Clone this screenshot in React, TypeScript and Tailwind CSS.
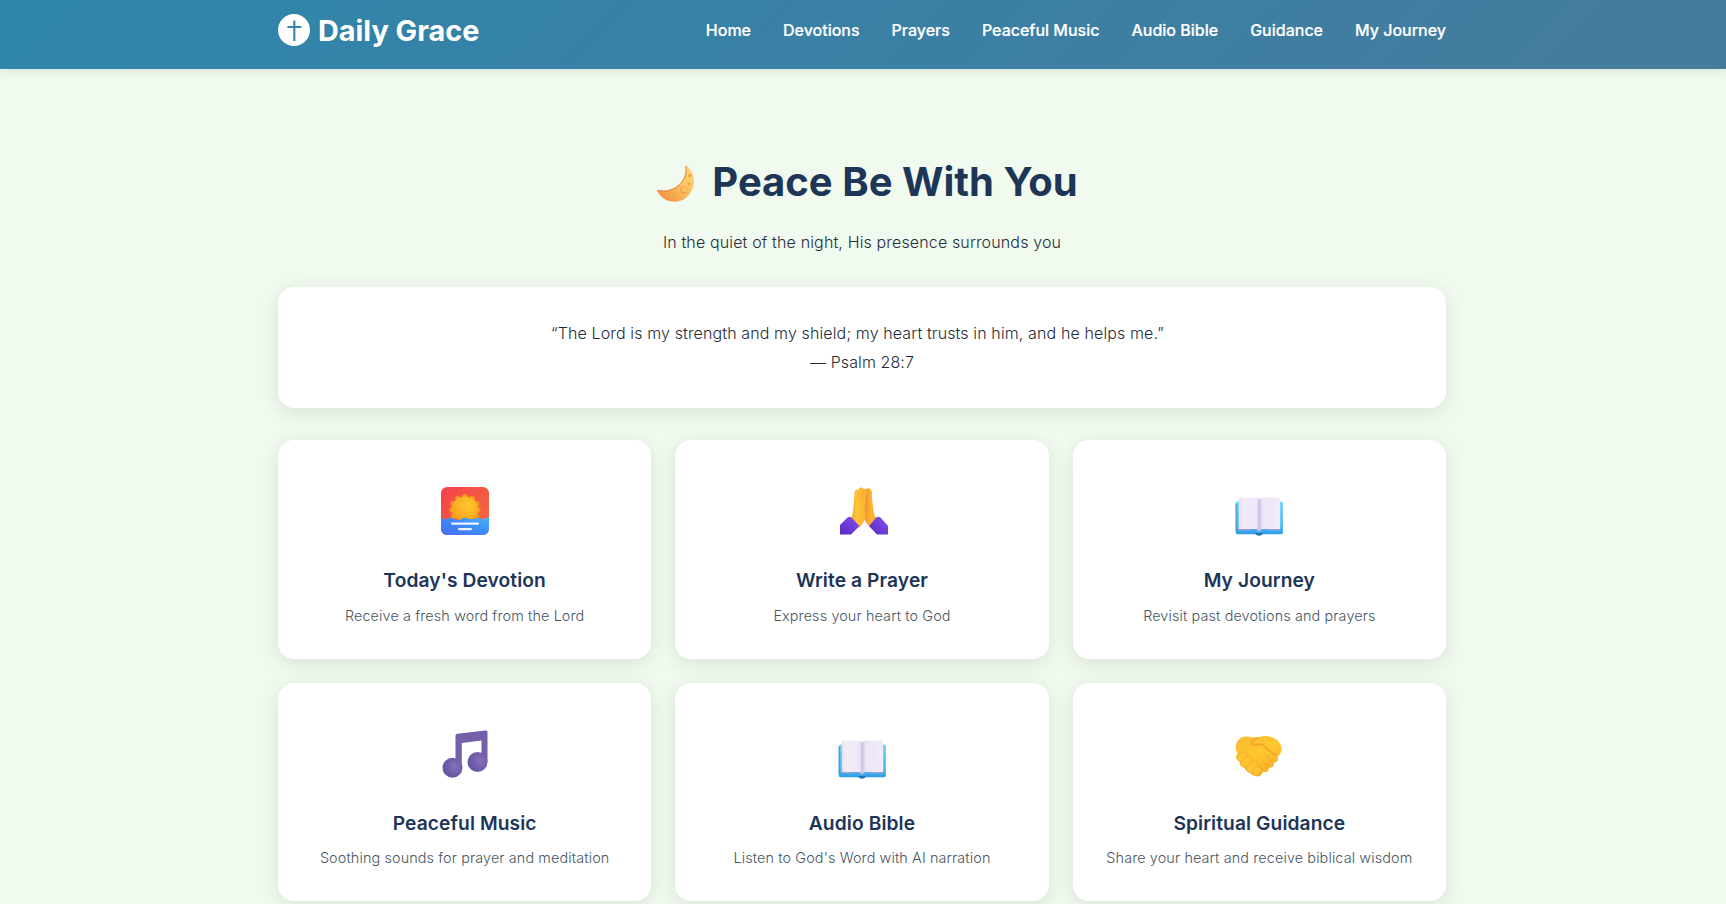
import type { ReactNode } from "react";

function SunriseIcon() {
  return (
    <svg width="48" height="48" viewBox="0 0 48 48">
      <defs>
        <linearGradient id="sky" x1="0" y1="0" x2="1" y2="1">
          <stop offset="0" stopColor="#f5404b" />
          <stop offset="1" stopColor="#f4713f" />
        </linearGradient>
        <linearGradient id="sea" x1="0" y1="1" x2="1" y2="0">
          <stop offset="0" stopColor="#4a6cf6" />
          <stop offset="0.55" stopColor="#3c8dfb" />
          <stop offset="1" stopColor="#4fb4f2" />
        </linearGradient>
        <radialGradient id="sun" cx="0.6" cy="0.35" r="0.7">
          <stop offset="0" stopColor="#ffc62c" />
          <stop offset="1" stopColor="#f9a31d" />
        </radialGradient>
        <clipPath id="frame">
          <rect width="48" height="48" rx="6" />
        </clipPath>
      </defs>
      <g clipPath="url(#frame)">
        <rect width="48" height="48" fill="url(#sky)" />
        <g fill="#f39a1d">
          <circle cx="24" cy="10" r="3" /><circle cx="17" cy="12" r="3" /><circle cx="31" cy="12" r="3" />
          <circle cx="12.5" cy="17" r="3" /><circle cx="35.5" cy="17" r="3" /><circle cx="11.5" cy="23" r="3" />
          <circle cx="36.5" cy="23" r="3" /><circle cx="13" cy="29" r="3" /><circle cx="35" cy="29" r="3" />
        </g>
        <circle cx="24" cy="22" r="12.6" fill="url(#sun)" />
        <path d="M0 31c3 0 3 2 6 1s4-2 7 0 6 1 8-.5 6 0 8 .6 5-.3 7-1 4 1 6 1 3-2 6-1.6V48H0Z" fill="url(#sea)" />
        <rect x="10" y="35.4" width="28" height="2.3" rx="1.1" fill="#eef1ff" />
        <rect x="17" y="41" width="14" height="2.2" rx="1.1" fill="#eef1ff" />
      </g>
    </svg>
  );
}

function PrayIcon() {
  return (
    <svg className="ml-1" width="48" height="48" viewBox="0 0 48 48">
      <defs>
        <linearGradient id="handL" x1="0" y1="0" x2="1" y2="0">
          <stop offset="0" stopColor="#f5a31f" />
          <stop offset="0.4" stopColor="#ffc637" />
          <stop offset="1" stopColor="#fbae2a" />
        </linearGradient>
        <linearGradient id="handR" x1="0" y1="0" x2="1" y2="0">
          <stop offset="0" stopColor="#ef9034" />
          <stop offset="0.45" stopColor="#ffb52d" />
          <stop offset="1" stopColor="#f8a426" />
        </linearGradient>
        <linearGradient id="cuff" x1="0" y1="1" x2="1" y2="0">
          <stop offset="0" stopColor="#542ac0" />
          <stop offset="1" stopColor="#8a50f4" />
        </linearGradient>
      </defs>
      <path d="M24 5c1-4 5-5 7-2 1.500 2 1 5 1 8l1 9 1.500 9 6 5-8 8c-6-4-8.500-9-8.500-16Z" fill="url(#handR)" />
      <path d="M14.500 6c0-4 3-4 4-3 0-3 4-3 5-1 3-1 3.500 1 3.500 3 0 9-1 15-1 22 0 6-3 9-7 14l-9-7c3-4 3.500-14 4.500-28Z" fill="url(#handL)" />
      <path d="M18.500 3.500v9M23 3l-.8 10" stroke="#f2a029" strokeWidth=".7" fill="none" />
      <path d="M25.800 28c0-8 .6-14 .8-21" stroke="#e78b3d" strokeWidth="1" fill="none" />
      <path d="M7.500 30.500c2-1 3-1 5 1l7 7.500-8.500 8.500H0V38Z" fill="url(#cuff)" />
      <path d="M40.500 30.500c-2-1-3-1-5 1l-6.500 7.500 8 8.500h11v-8.500Z" fill="url(#cuff)" />
    </svg>
  );
}

function BookIcon() {
  return (
    <svg className="overflow-visible" width="48" height="48" viewBox="0 0 48 48">
      <defs>
        <linearGradient id="cover" x1="0" y1="0" x2="0" y2="1">
          <stop offset="0" stopColor="#6fd0f4" />
          <stop offset="0.75" stopColor="#43bdf8" />
          <stop offset="1" stopColor="#2f9be6" />
        </linearGradient>
        <linearGradient id="pages" x1="0" y1="0" x2="1" y2="0">
          <stop offset="0" stopColor="#e6dff0" />
          <stop offset="0.08" stopColor="#f1eaf8" />
          <stop offset="0.42" stopColor="#efe8f9" />
          <stop offset="0.5" stopColor="#d2c4e4" />
          <stop offset="0.58" stopColor="#ede5f8" />
          <stop offset="1" stopColor="#f1ebfa" />
        </linearGradient>
      </defs>
      <rect x=".7" y="14.500" width="47.200" height="32.800" rx="1.800" fill="url(#cover)" />
      <path d="M1.200 17v27" stroke="#548cb0" strokeWidth="1" />
      <path d="M20 46h8c-.8 3.600-7.200 3.600-8 0Z" fill="#1974ba" />
      <path d="M3.500 41 24 43.500 45 41v2.200H27l-3 2-3-2H3.500Z" fill="#aaa1cb" />
      <path d="M5.500 10.500H20q3 0 4.300 1.700 1.200-1.700 4-1.700h15.200q1.700 0 1.700 1.700V42H28q-2.500 0-3.800 2-1.500-2-4.200-2H3.800V12.200q0-1.700 1.700-1.700Z" fill="url(#pages)" />
      <path d="M24.300 12.500V43" stroke="#c9bcdd" strokeWidth=".7" />
    </svg>
  );
}

function MusicIcon() {
  return (
    <svg width="48" height="48" viewBox="0 0 48 48">
      <defs>
        <radialGradient id="note" cx="0.62" cy="0.42" r="0.6">
          <stop offset="0" stopColor="#8570bd" />
          <stop offset="1" stopColor="#6654a0" />
        </radialGradient>
      </defs>
      <path d="M14.500 5.600Q14.500 4 16.100 3.700L44.500.5Q46.500.3 46.500 2.100V32h-6V10.500L20.800 13v25h-6.300Z" fill="#7360a9" />
      <circle cx="11.500" cy="37.800" r="10" fill="url(#note)" />
      <circle cx="36.500" cy="32" r="10" fill="url(#note)" />
    </svg>
  );
}

function HandshakeIcon() {
  return (
    <svg className="overflow-visible" width="48" height="48" viewBox="0 -0.5 48 48">
      <defs>
        <linearGradient id="shake" x1="0" y1="0" x2="0.6" y2="1">
          <stop offset="0" stopColor="#f8b92f" />
          <stop offset="0.5" stopColor="#ffc72e" />
          <stop offset="1" stopColor="#f9ae2b" />
        </linearGradient>
      </defs>
      <path d="M2 12c2-5 6-6 10-6 4-.2 7 2 11 1 4-1.400 8-2 13-.6 6 1.600 10 6 10.500 11 .4 4-1 6-4 8.600 1.500 4-.5 6-3.500 6 .4 4-2 6-5 5 0 4-3 6-6 4-1.500 5-5 6.500-8 3.500-2 1-5-.5-5-3.500-4 0-6-2-5-5-4 .3-6-2-5-5C.5 29 0 26 2.500 23 .3 19 0 15 2 12Z" fill="url(#shake)" />
      <path d="M23 7c-4 1-7 4-6 6 2 3 6 1 9 .4 4 2 7 6 11 9 3 2 4 2 5 3" stroke="#ef9f2a" strokeWidth="1.300" fill="none" strokeLinecap="round" />
      <path d="m32 26 6 6m-10-1 6 5m-10-1 4 5" stroke="#f0a02a" strokeWidth=".8" fill="none" strokeLinecap="round" />
      <g fill="#ffc430" stroke="#f3a42b" strokeWidth=".7">
        <rect x="1.500" y="22.500" width="11" height="7.500" rx="3.700" transform="rotate(-40 7 26)" />
        <rect x="4.500" y="27.500" width="13.500" height="7.500" rx="3.700" transform="rotate(-42 11 31)" />
        <rect x="10" y="32.500" width="13" height="7.400" rx="3.700" transform="rotate(-43 16.500 36)" />
        <rect x="16.500" y="37.200" width="10" height="7" rx="3.500" transform="rotate(-43 21.500 40.500)" />
      </g>
    </svg>
  );
}

function MoonIcon() {
  return (
    <svg className="mt-[3px] h-10 w-10" viewBox="0 0 40 40">
      <defs>
        <linearGradient id="moon" x1="1" y1="0" x2="0.1" y2="1">
          <stop offset="0" stopColor="#ffda79" />
          <stop offset="0.5" stopColor="#fcc160" />
          <stop offset="1" stopColor="#f18a40" />
        </linearGradient>
      </defs>
      <path d="M29.200 2c.3-1 1-1 1.700-.2 3.800 3.800 7.400 9.600 7.100 15.700C37.500 28 30 37.600 19 37.800 10.500 38 4.500 33 1.400 27.300c-.6-1.200 0-1.900 1-1.600C9 27.700 18 25.500 23.700 19.600 28.500 14.600 30.300 8 29.200 2Z" fill="url(#moon)" />
      <path d="M29.700 2c1.300 7-.6 13.300-5.500 18.300C18 26.600 9 28.400 2 26.300" fill="none" stroke="#e68a50" strokeWidth="1" />
      <g fill="#f4ab4b" stroke="#e99a43" strokeWidth=".6">
        <circle cx="28" cy="26" r="3.400" /><circle cx="15.500" cy="31" r="2.300" />
        <circle cx="34" cy="11.500" r="1.600" /><circle cx="33" cy="20" r="1.200" />
      </g>
      <circle cx="28.700" cy="25.400" r="2.500" fill="#fdc264" />
    </svg>
  );
}

const links = ["Home", "Devotions", "Prayers", "Peaceful Music", "Audio Bible", "Guidance", "My Journey"];

const cards: { icon: ReactNode; title: string; text: string }[] = [
  { icon: <SunriseIcon />, title: "Today's Devotion", text: "Receive a fresh word from the Lord" },
  { icon: <PrayIcon />, title: "Write a Prayer", text: "Express your heart to God" },
  { icon: <BookIcon />, title: "My Journey", text: "Revisit past devotions and prayers" },
  { icon: <MusicIcon />, title: "Peaceful Music", text: "Soothing sounds for prayer and meditation" },
  { icon: <BookIcon />, title: "Audio Bible", text: "Listen to God's Word with AI narration" },
  { icon: <HandshakeIcon />, title: "Spiritual Guidance", text: "Share your heart and receive biblical wisdom" },
];

export default function App() {
  return (
    <div className="h-screen overflow-hidden bg-[#f1faee] font-['Inter',sans-serif] text-base leading-[28.8px] font-light text-[#1f2d38]">
      <header className="h-[69px] bg-[linear-gradient(135deg,#2e86ab,#457b9d)] pr-0.5 shadow-[0_2px_10px_rgba(0,0,0,0.1)]">
        <div className="mx-auto flex h-[60px] w-[1168px] items-center justify-between text-white">
          <div className="flex items-center gap-2">
            <svg className="h-8 w-8" viewBox="0 0 32 32">
              <circle cx="16" cy="16" r="16" fill="#fff" />
              <path d="M16.300 6.500v20.500M9.400 13h14" stroke="#3784aa" strokeWidth="2.100" />
            </svg>
            <span className="mt-[3px] text-[28.800px] font-bold">Daily Grace</span>
          </div>
          <nav className="mt-px flex gap-8 font-medium [-webkit-text-stroke:0.2px_white]">
            {links.map((link) => (
              <a key={link} href="#">{link}</a>
            ))}
          </nav>
        </div>
      </header>
      <main className="pr-0.5">
        <div className="mx-auto w-[1168px] pt-[77px] text-center">
          <div className="flex h-[72px] items-center justify-center gap-4 pl-[10px]">
            <MoonIcon />
            <h1 className="text-[40px] font-bold text-[#1d3557]">Peace Be With You</h1>
          </div>
          <p className="mt-2.5 tracking-[0.145px]">In the quiet of the night, His presence surrounds you</p>
          <section className="mt-[30px] h-[121px] rounded-2xl bg-white pt-8 shadow-[0_4px_20px_rgba(0,0,0,0.1)]">
            <p className="pr-[9px] tracking-[0.122px]">“The Lord is my strength and my shield; my heart trusts in him, and he helps me.”</p>
            <p className="tracking-[0.1px]">— Psalm 28:7</p>
          </section>
          <section className="mt-8 grid grid-cols-3 grid-rows-[219px_218px] gap-6">
            {cards.map((card, index) => (
              <article key={card.title} className="flex flex-col items-center rounded-2xl bg-white pt-[47px] shadow-[0_4px_20px_rgba(0,0,0,0.1)]">
                {card.icon}
                <h2 className="mt-[27px] h-9 text-[19.200px] leading-9 font-semibold tracking-[0.1px] text-[#1d3557]">{card.title}</h2>
                <p className={`${index < 3 ? "mt-[4.5px]" : "mt-[3px]"} text-[14.400px] tracking-[0.12px] text-[#48575f]`}>{card.text}</p>
              </article>
            ))}
          </section>
        </div>
      </main>
    </div>
  );
}
